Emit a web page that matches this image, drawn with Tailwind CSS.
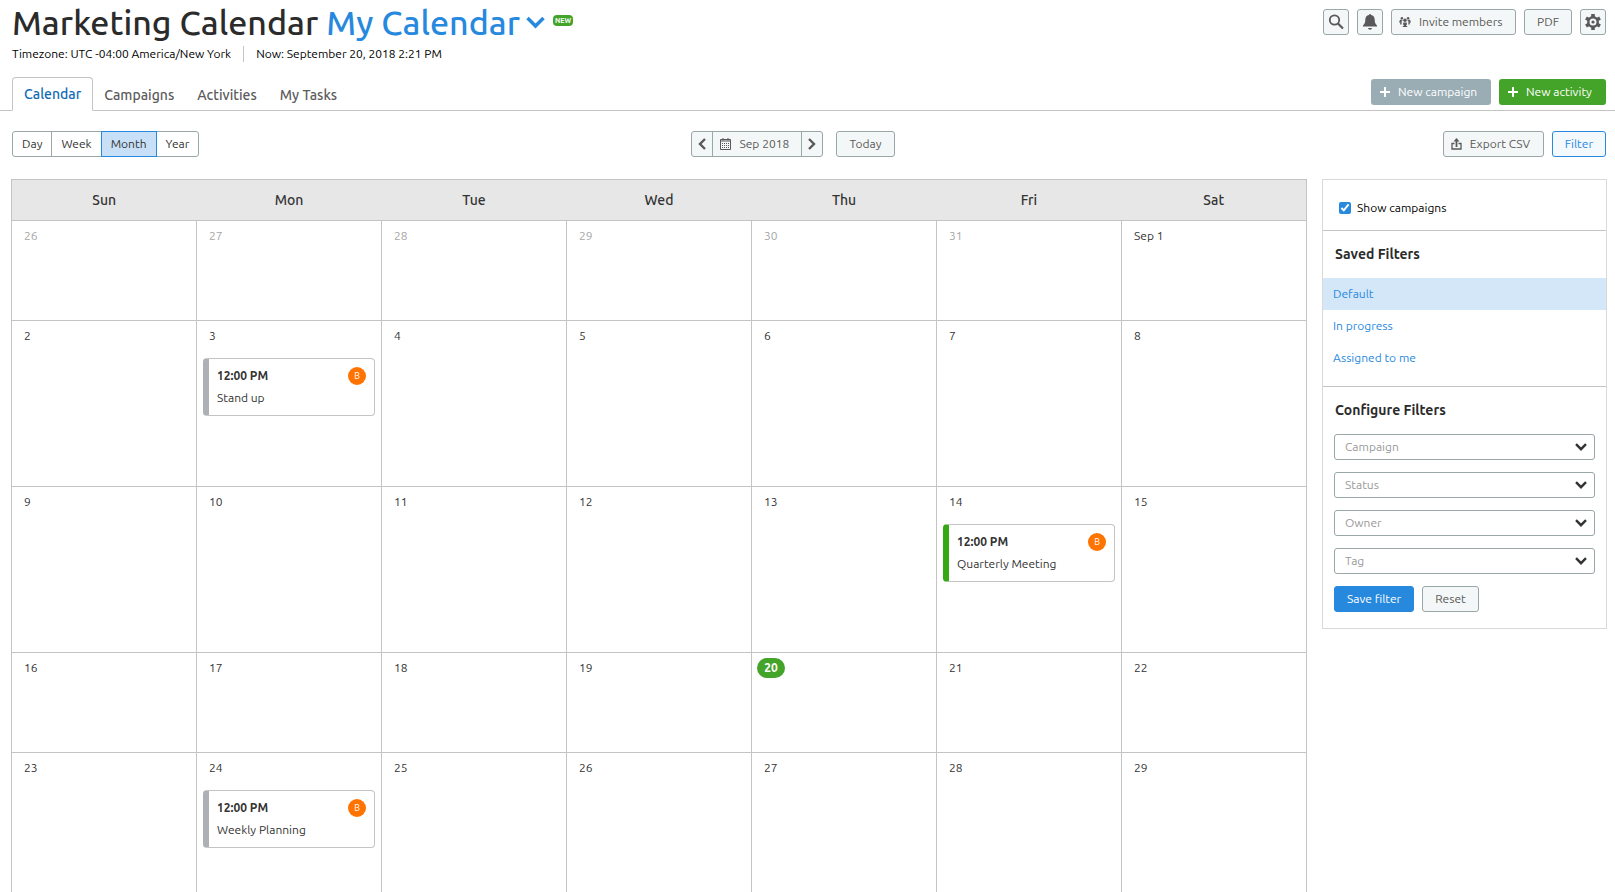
<!DOCTYPE html>
<html lang="en">

<head>
  <meta charset="UTF-8" />
  <meta name="viewport" content="width=device-width, initial-scale=1.0" />
  <title>Marketing Calendar</title>
  <script src="https://cdn.jsdelivr.net/npm/@tailwindcss/browser@4"></script>
</head>

<body class="bg-white font-['Ubuntu','Noto_Sans',sans-serif] text-[12px] leading-4 text-[#333]">
  <div class="h-screen overflow-hidden flex flex-col">
    <!-- Title bar -->
    <header class="flex justify-between items-start pl-3 pr-[9px] pt-1">
      <div>
        <div class="flex items-center h-9">
          <h1 class="text-[34px] leading-9 font-medium text-[#2b2b2b]">Marketing Calendar</h1>
          <button class="flex items-center gap-[6px] ml-2 text-[34px] leading-9 font-medium text-[#2789de]">
            My Calendar
            <svg class="w-[19px] h-[13px]" viewBox="0 0 19 13" fill="none" stroke="currentColor" stroke-width="3.500"><path d="M1.500 2l8 8 8-8" /></svg>
          </button>
          <span class="self-center ml-2 -mt-1 w-5 h-[11px] rounded bg-[#44a329] text-white text-[7px] leading-[11px] font-bold text-center">NEW</span>
        </div>
        <div class="flex items-center mt-[6px] text-black">
          <span class="pr-3 border-r border-[#c4c4c4]">Timezone: UTC -04:00 America/New York</span>
          <span class="pl-3">Now: September 20, 2018 2:21 PM</span>
        </div>
      </div>
      <div class="flex gap-2 mt-[5px] text-[#595959]">
        <button aria-label="Search" class="flex items-center justify-center w-[26px] h-[26px] border border-[#9aa7a9] rounded-[3px] bg-[#f4f7f7]">
          <svg class="w-4 h-4" viewBox="0 0 16 16" fill="none" stroke="currentColor"><circle cx="6.500" cy="6" r="4.700" stroke-width="1.800" /><path d="M10 9.500l5 5" stroke-width="2.200" /></svg>
        </button>
        <button aria-label="Notifications" class="flex items-center justify-center w-[26px] h-[26px] border border-[#9aa7a9] rounded-[3px] bg-[#f4f7f7]">
          <svg class="w-4 h-4" viewBox="0 0 16 16" fill="currentColor"><path d="M7 1a1 1 0 0 1 2 0c2.500.5 3.700 2.200 3.700 4.500 0 3 .6 4.500 2.300 6v.900H1v-.9c1.700-1.500 2.300-3 2.300-6C3.300 3.200 4.500 1.500 7 1zM6 14h4c-.2 1-1 1.700-2 1.700S6.200 15 6 14z" /></svg>
        </button>
        <button class="flex items-center gap-2 h-[26px] px-[7px] w-[125px] whitespace-nowrap border border-[#9aa7a9] rounded-[3px] bg-[#f4f7f7]">
          <svg class="w-3 h-[10px] shrink-0" viewBox="0 0 12 10" fill="currentColor"><circle cx="6" cy="3.300" r="1.700" /><path d="M4.200 5.500h3.600v2.500h-.6v1h1V10H3.800V9h1V8h-.6z" /><circle cx="2.900" cy="1.300" r="1.200" /><circle cx="9.100" cy="1.300" r="1.200" /><path d="M1 2.800h2.500v1H2.600V7.500H1.200V5.500H0zM11 2.800H8.500v1h.9V7.500h1.400V5.500H12z" /></svg>
          Invite members
        </button>
        <button class="h-[26px] px-3 border border-[#9aa7a9] rounded-[3px] bg-[#f4f7f7]">PDF</button>
        <button aria-label="Settings" class="flex items-center justify-center w-[26px] h-[26px] border border-[#9aa7a9] rounded-[3px] bg-[#f4f7f7]">
          <svg class="w-4 h-4" viewBox="0 0 16 16" fill="none" stroke="currentColor"><circle cx="8" cy="8" r="4.700" stroke-width="2.400" /><circle cx="8" cy="8" r="1.600" fill="currentColor" stroke="none" /><path d="M8 0v3M8 13v3M1 4l2.600 1.500M12.400 10.500L15 12M1 12l2.600-1.500M12.400 5.500L15 4" stroke-width="3.600" /></svg>
        </button>
      </div>
    </header>

    <!-- Tabs -->
    <nav class="flex justify-between items-end mt-[15px] pl-3 pr-[9px] border-b border-[#c4c4c4]">
      <div class="flex items-end text-[14px] leading-5 font-medium text-[#5c5c5c]">
        <a href="#" class="-mb-px px-[11px] pt-[6px] pb-[6px] border border-b-white border-[#c4c4c4] rounded-t text-[#0f6ab4]">Calendar</a>
        <a href="#" class="px-[11px] pb-[5px]">Campaigns</a>
        <a href="#" class="px-3 pb-[5px]">Activities</a>
        <a href="#" class="px-[11px] pb-[5px]">My Tasks</a>
      </div>
      <div class="flex gap-2 mb-[5px] text-white">
        <button class="flex items-center gap-2 h-[26px] px-[9px] w-[120px] whitespace-nowrap rounded-[3px] bg-[#9aadb5]">
          <svg class="w-[10px] h-[10px] shrink-0" viewBox="0 0 10 10" fill="currentColor"><path d="M4 0h2v4h4v2H6v4H4V6H0V4h4z" /></svg>
          New campaign
        </button>
        <button class="flex items-center gap-2 h-[26px] px-[9px] w-[107px] whitespace-nowrap rounded-[3px] bg-[#44a329]">
          <svg class="w-[10px] h-[10px] shrink-0" viewBox="0 0 10 10" fill="currentColor"><path d="M4 0h2v4h4v2H6v4H4V6H0V4h4z" /></svg>
          New activity
        </button>
      </div>
    </nav>

    <!-- Toolbar -->
    <div class="grid grid-cols-[1fr_auto_1fr] mt-5 pl-3 pr-[9px]">
      <div class="flex justify-self-start h-[26px] border border-[#9aa7a9] rounded-[3px]">
        <button class="px-[9px]">Day</button>
        <button class="px-[9px] border-l border-[#9aa7a9]">Week</button>
        <button class="-my-px px-[9px] border border-[#2789de] bg-[#c8e0f7]">Month</button>
        <button class="px-[9px]">Year</button>
      </div>
      <div class="flex gap-[13px] mr-8 text-[#595959]">
        <div class="flex h-[26px] border border-[#9aa7a9] rounded-[3px] bg-[#f4f7f7]">
          <button aria-label="Previous month" class="flex items-center justify-center w-5">
            <svg class="w-2 h-3" viewBox="0 0 8 12" fill="none" stroke="currentColor" stroke-width="2.400"><path d="M7 1L2 6l5 5" /></svg>
          </button>
          <button class="flex items-center gap-2 w-[90px] px-[7px] border-x border-[#9aa7a9] whitespace-nowrap">
            <svg class="w-[11px] h-3 shrink-0" viewBox="0 0 11 12" fill="none" stroke="currentColor"><path d="M.5 1.500h10v10H.5z" /><path d="M1 3h9M3 0v2.500M8 0v2.500" /><path d="M2 5.500h7M2 7.500h7M2 9.500h7" stroke-dasharray="1 1" /></svg>
            Sep 2018
          </button>
          <button aria-label="Next month" class="flex items-center justify-center w-5">
            <svg class="w-2 h-3" viewBox="0 0 8 12" fill="none" stroke="currentColor" stroke-width="2.400"><path d="M1 1l5 5-5 5" /></svg>
          </button>
        </div>
        <button class="h-[26px] px-3 border border-[#9aa7a9] rounded-[3px] bg-[#f4f7f7]">Today</button>
      </div>
      <div class="flex justify-self-end gap-2">
        <button class="flex items-center gap-2 h-[26px] w-[101px] px-[7px] whitespace-nowrap border border-[#9aa7a9] rounded-[3px] bg-[#f4f7f7] text-[#595959]">
          <svg class="w-[11px] h-3 shrink-0" viewBox="0 0 11 12" fill="none" stroke="currentColor"><path d="M3.500 5.500H1v5.500h9V5.500H7.500" stroke-width="1.300" /><path d="M5.500 9V2" stroke-width="1.800" /><path d="M5.500 0l3 3.500h-6z" fill="currentColor" stroke="none" /></svg>
          Export CSV
        </button>
        <button class="h-[26px] px-3 border border-[#2789de] rounded-[3px] bg-[#f4f9fe] text-[#2789de]">Filter</button>
      </div>
    </div>

    <main class="flex items-start gap-[15px] mt-[22px] pl-[11px] pr-2">
      <!-- Month grid -->
      <table class="flex-1 table table-fixed w-full border-collapse border border-[#c4c4c4]">
        <thead class="bg-[#e7e7e7] text-[14px] leading-5">
          <tr class="h-[41px]">
            <th class="font-medium">Sun</th>
            <th class="font-medium">Mon</th>
            <th class="font-medium">Tue</th>
            <th class="font-medium">Wed</th>
            <th class="font-medium">Thu</th>
            <th class="font-medium">Fri</th>
            <th class="font-medium">Sat</th>
          </tr>
        </thead>
        <tbody id="month"></tbody>
      </table>

      <!-- Filter panel -->
      <aside class="w-[285px] shrink-0 border border-[#d9d9d9]">
        <div class="px-4 pt-5 pb-[14px] border-b border-[#c4c4c4]">
          <label for="campaigns" class="flex items-center gap-[6px] text-black">
            <input id="campaigns" type="checkbox" checked class="w-3 h-3 accent-[#2789de]" />
            Show campaigns
          </label>
        </div>
        <div class="pb-3 border-b border-[#c4c4c4]">
          <h2 class="px-3 pt-[13px] pb-[14px] text-[14px] leading-5 font-bold text-[#2b2b2b]">Saved Filters</h2>
          <a href="#" class="block px-[10px] py-2 text-[#2789de] bg-[#d4e7f8]">Default</a>
          <a href="#" class="block px-[10px] py-2 text-[#2789de]">In progress</a>
          <a href="#" class="block px-[10px] py-2 text-[#2789de]">Assigned to me</a>
        </div>
        <div class="px-[11px] pt-[13px] pb-4">
          <h2 class="pl-px mb-[14px] text-[14px] leading-5 font-bold text-[#2b2b2b]">Configure Filters</h2>
          <div id="selects" class="grid gap-3"></div>
          <div class="flex gap-2 mt-3">
            <button class="h-[26px] px-3 border border-[#2789de] rounded-[3px] bg-[#2789de] text-white">Save filter</button>
            <button class="h-[26px] px-3 border border-[#9aa7a9] rounded-[3px] bg-[#f4f7f7] text-[#595959]">Reset</button>
          </div>
        </div>
      </aside>
    </main>
  </div>

  <script>
    const weeks = [
      ['26', '27', '28', '29', '30', '31', 'Sep 1'],
      ['2', '3', '4', '5', '6', '7', '8'],
      ['9', '10', '11', '12', '13', '14', '15'],
      ['16', '17', '18', '19', '20', '21', '22'],
      ['23', '24', '25', '26', '27', '28', '29'],
    ];

    const events = {
      '1-1': { name: 'Stand up', bar: 'border-l-[#adb1b5]' },
      '2-5': { name: 'Quarterly Meeting', bar: 'border-l-[#35a813]' },
      '4-1': { name: 'Weekly Planning', bar: 'border-l-[#adb1b5]' },
    };

    function renderEvent(event) {
      return `
        <div class="mx-[6px] mt-[14px] h-[58px] pl-2 pr-2 pt-2 border border-l-[6px] border-[#c4c4c4] ${event.bar} rounded">
          <div class="flex items-center justify-between h-[18px]">
            <b>12:00 PM</b>
            <span class="w-[18px] h-[18px] rounded-full bg-[#ff7300] text-white text-[9px] leading-[18px] text-center">B</span>
          </div>
          <div class="mt-[5px]">${event.name}</div>
        </div>
      `;
    }

    function renderMonth() {
      let html = '';
      weeks.forEach((week, w) => {
        const busy = week.some((day, d) => events[w + '-' + d]);
        html += `<tr class="${busy ? 'h-[166px]' : 'h-[100px]'}">`;
        week.forEach((day, d) => {
          const event = events[w + '-' + d];
          let label = `<div class="px-3 pt-[2px]">${day}</div>`;
          if (w === 0 && d < 6) label = `<div class="px-3 pt-[2px] text-[#a6a6a6]">${day}</div>`;
          if (day === '20') label = `<div class="inline-block ml-[5px] w-7 rounded-full bg-[#44a329] text-white font-bold text-center leading-5">${day}</div>`;
          html += `<td class="p-0 pt-[5px] align-top border border-[#c4c4c4]">${label}${event ? renderEvent(event) : ''}</td>`;
        });
        html += `</tr>`;
      });
      document.getElementById('month').innerHTML = html;
    }

    function renderSelects() {
      document.getElementById('selects').innerHTML = ['Campaign', 'Status', 'Owner', 'Tag'].map(name => `
        <div class="relative">
          <select aria-label="${name}" class="block appearance-none w-full h-[26px] px-[10px] border border-[#9aa7a9] rounded-[3px] bg-white text-[#999]">
            <option>${name}</option>
          </select>
          <svg class="absolute right-2 top-[9px] w-[12px] h-2 pointer-events-none" viewBox="0 0 12 8" fill="none" stroke="#333" stroke-width="2.400"><path d="M1 1.200l5 5 5-5" /></svg>
        </div>
      `).join('');
    }

    renderMonth();
    renderSelects();
  </script>
</body>

</html>
